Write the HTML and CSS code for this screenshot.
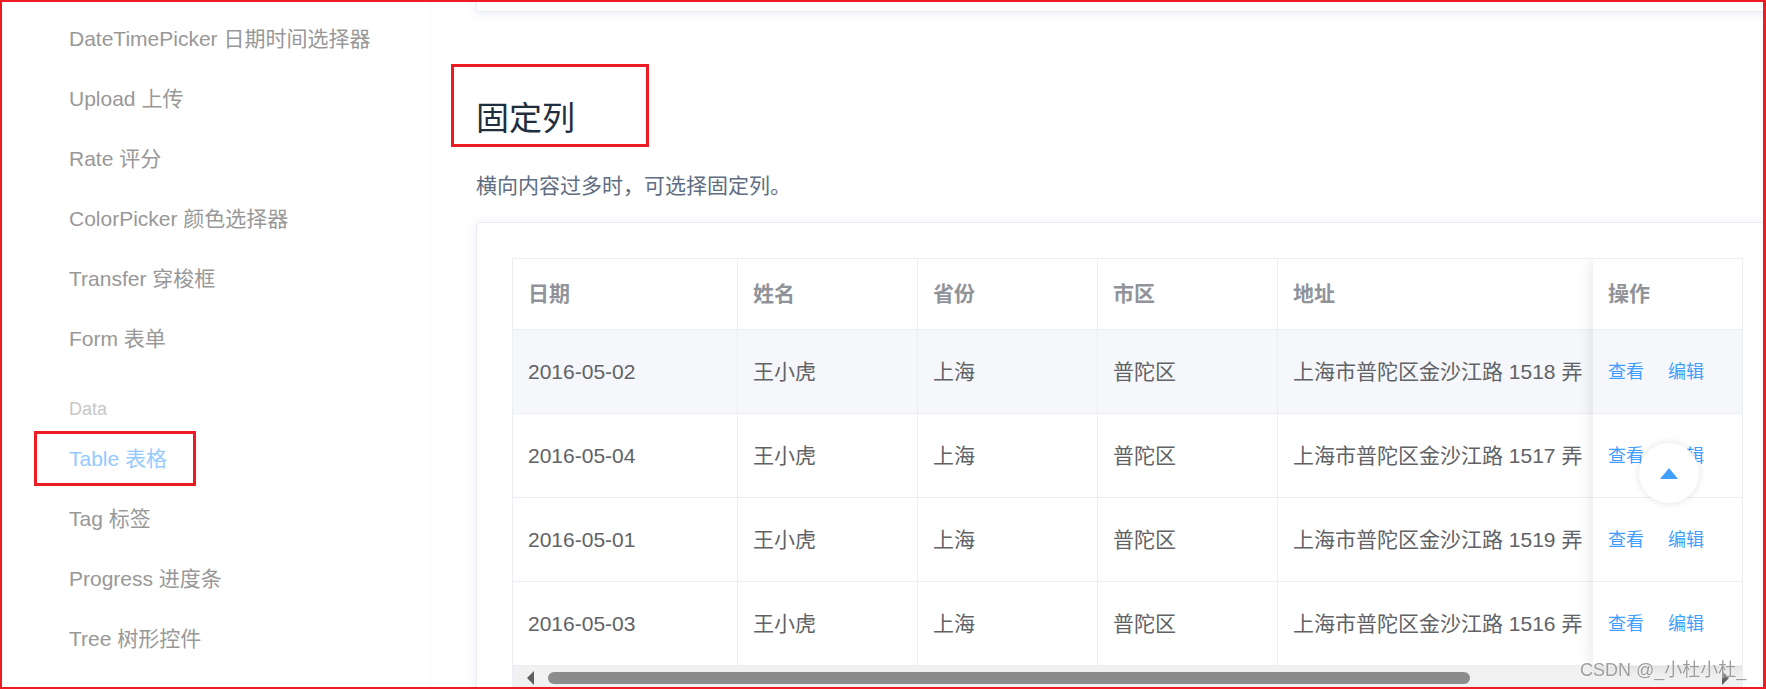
FILE: index.html
```html
<!DOCTYPE html>
<html lang="zh-CN">
<head>
<meta charset="utf-8">
<title>Table 表格</title>
<link rel="stylesheet" href="styles.css">
</head>
<body>
<div class="page">
  <aside class="sidebar">
    <ul class="nav">
      <li class="nav-item">DateTimePicker 日期时间选择器</li>
      <li class="nav-item">Upload 上传</li>
      <li class="nav-item">Rate 评分</li>
      <li class="nav-item">ColorPicker 颜色选择器</li>
      <li class="nav-item">Transfer 穿梭框</li>
      <li class="nav-item">Form 表单</li>
      <li class="nav-group">Data</li>
      <li class="nav-item active">Table 表格<span class="mark mark-nav"></span></li>
      <li class="nav-item">Tag 标签</li>
      <li class="nav-item">Progress 进度条</li>
      <li class="nav-item">Tree 树形控件</li>
    </ul>
  </aside>
  <main class="content">
    <div class="demo-block demo-prev"></div>
    <h3 class="title">固定列<span class="mark mark-title"></span></h3>
    <p class="desc">横向内容过多时，可选择固定列。</p>
    <div class="demo-block demo-table">
      <div class="el-table">
        <table class="grid main-grid">
          <colgroup>
            <col class="c-date"><col class="c-mid"><col class="c-mid"><col class="c-mid"><col class="c-addr"><col class="c-mid"><col class="c-op">
          </colgroup>
          <thead>
            <tr><th>日期</th><th>姓名</th><th>省份</th><th>市区</th><th>地址</th><th></th><th></th></tr>
          </thead>
          <tbody>
            <tr class="hover"><td>2016-05-02</td><td>王小虎</td><td>上海</td><td>普陀区</td><td>上海市普陀区金沙江路 1518 弄</td><td></td><td></td></tr>
            <tr><td>2016-05-04</td><td>王小虎</td><td>上海</td><td>普陀区</td><td>上海市普陀区金沙江路 1517 弄</td><td></td><td></td></tr>
            <tr><td>2016-05-01</td><td>王小虎</td><td>上海</td><td>普陀区</td><td>上海市普陀区金沙江路 1519 弄</td><td></td><td></td></tr>
            <tr><td>2016-05-03</td><td>王小虎</td><td>上海</td><td>普陀区</td><td>上海市普陀区金沙江路 1516 弄</td><td></td><td></td></tr>
          </tbody>
        </table>
        <div class="fixed-right">
          <table class="grid op-grid">
            <colgroup><col class="c-op"></colgroup>
            <thead><tr><th>操作</th></tr></thead>
            <tbody>
              <tr class="hover"><td><span class="link">查看</span><span class="link">编辑</span></td></tr>
              <tr><td><span class="link">查看</span><span class="link">编辑</span></td></tr>
              <tr><td><span class="link">查看</span><span class="link">编辑</span></td></tr>
              <tr><td><span class="link">查看</span><span class="link">编辑</span></td></tr>
            </tbody>
          </table>
        </div>
        <div class="hscroll">
          <svg class="arrow" viewBox="0 0 8 14" width="8" height="14"><polygon points="8,0 8,14 1,7" fill="#5f5f5f"/></svg>
          <div class="thumb"></div>
          <div class="spacer"></div>
          <svg class="arrow" viewBox="0 0 8 14" width="8" height="14"><polygon points="0,0 0,14 7,7" fill="#5f5f5f"/></svg>
        </div>
      </div>
    </div>
  </main>
</div>
<div class="backtop">
  <svg viewBox="0 0 18 11" width="18" height="11"><polygon points="0,11 9,0 18,11" fill="#409eff"/></svg>
</div>
<div class="watermark">CSDN @_小杜小杜_</div>
<div class="frame"></div>
</body>
</html>
```
FILE: styles.css
```css
html, body {
  margin: 0;
  padding: 0;
  overflow: hidden;
  background: #fff;
}
body {
  width: 1766px;
  height: 689px;
  font-family: "Liberation Sans", "Noto Sans CJK SC", sans-serif;
}
.page {
  display: flex;
  height: 689px;
  overflow: hidden;
}
.sidebar {
  flex: none;
  width: 430px;
  border-right: 1px solid #fafafa;
}
.nav {
  list-style: none;
  margin: 0;
  padding: 9px 0 0 0;
}
.nav-item {
  position: relative;
  height: 60px;
  line-height: 60px;
  font-size: 21px;
  color: #989898;
  padding-left: 69px;
  white-space: nowrap;
}
.nav-item.active {
  color: #96caff;
}
.nav-group {
  margin-top: 21px;
  font-size: 18px;
  line-height: 39px;
  color: #c7c7c7;
  padding-left: 69px;
}
.mark {
  position: absolute;
  box-sizing: border-box;
  border: 3px solid #ed1c24;
  pointer-events: none;
}
.mark-nav {
  left: 34px;
  top: 2px;
  width: 162px;
  height: 55px;
}
.content {
  flex: none;
  padding-left: 45px;
}
.demo-block {
  box-sizing: border-box;
  width: 1303px;
  border: 1px solid #ebebeb;
  border-radius: 4px;
  background: #fff;
  box-shadow: 0 0 12px 0 rgba(232, 237, 250, .6), 0 3px 6px 0 rgba(232, 237, 250, .5);
}
.demo-prev {
  height: 12px;
  border-top: none;
  border-radius: 0 0 4px 4px;
}
.title {
  position: relative;
  margin: 82px 0 0;
  font-size: 33px;
  line-height: 50px;
  font-weight: 400;
  color: #1f2f3d;
}
.mark-title {
  left: -25px;
  top: -30px;
  width: 198px;
  height: 83px;
}
.desc {
  margin: 26px 0 0;
  font-size: 21px;
  line-height: 32px;
  color: #5e6d82;
}
.demo-table {
  margin-top: 20px;
  padding: 35px;
  height: 600px;
}
.el-table {
  position: relative;
  box-sizing: border-box;
  width: 1231px;
  border-left: 1px solid #ebeef5;
  border-top: 1px solid #ebeef5;
  overflow: hidden;
}
.grid {
  border-collapse: separate;
  border-spacing: 0;
  table-layout: fixed;
}
.main-grid {
  width: 1545px;
}
.op-grid {
  width: 150px;
}
.c-date { width: 225px; }
.c-mid { width: 180px; }
.c-addr { width: 450px; }
.c-op { width: 150px; }
.grid th,
.grid td {
  box-sizing: content-box;
  padding: 0 15px;
  border-right: 1px solid #ebeef5;
  border-bottom: 1px solid #ebeef5;
  text-align: left;
  vertical-align: middle;
  white-space: nowrap;
  overflow: hidden;
  font-size: 21px;
  line-height: 34px;
  background: #fff;
}
.grid th {
  height: 70px;
  color: #909399;
  font-weight: 700;
}
.grid td {
  height: 83px;
  color: #606266;
}
.grid tr.hover td {
  background: #f5f7fa;
}
.fixed-right {
  position: absolute;
  top: 0;
  right: 0;
  width: 150px;
  background: #fff;
  box-shadow: 0 0 15px rgba(0, 0, 0, .12);
}
.link {
  color: #409eff;
  font-size: 18px;
}
.link + .link {
  margin-left: 24px;
}
.hscroll {
  box-sizing: border-box;
  display: flex;
  align-items: center;
  height: 24px;
  padding: 0 13px;
  background: #f1f1f1;
}
.arrow {
  flex: none;
  display: block;
}
.thumb {
  flex: none;
  margin-left: 14px;
  width: 922px;
  height: 12px;
  border-radius: 6px;
  background: #8c8c8c;
}
.spacer {
  flex: 1;
}
.backtop {
  position: fixed;
  left: 1639px;
  top: 443px;
  width: 60px;
  height: 60px;
  border-radius: 50%;
  background: #fff;
  box-shadow: 0 0 9px rgba(0, 0, 0, .12);
  display: flex;
  align-items: center;
  justify-content: center;
}
.backtop svg {
  display: block;
}
.watermark {
  position: fixed;
  left: 1580px;
  top: 659px;
  font-size: 18px;
  line-height: 22px;
  color: #9d9d9d;
  white-space: nowrap;
  text-shadow: 0 0 2px #fff;
}
.frame {
  position: fixed;
  left: 0;
  top: 0;
  right: 0;
  bottom: 0;
  border: 2px solid #ed1c24;
  border-right-width: 3px;
  pointer-events: none;
}
```
